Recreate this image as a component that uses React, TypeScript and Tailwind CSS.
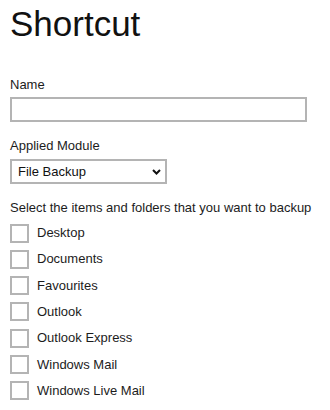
import { useState } from "react";

const items = [
  "Desktop",
  "Documents",
  "Favourites",
  "Outlook",
  "Outlook Express",
  "Windows Mail",
  "Windows Live Mail",
];

export default function App() {
  const [name, setName] = useState("");
  const [module, setModule] = useState("File Backup");
  const [checked, setChecked] = useState<Record<string, boolean>>({});

  return (
    <div className="w-[330px] h-[410px] bg-white pl-[10px] pt-[4px] text-[#1c1c1c] font-['Liberation_Sans',Arial,sans-serif]">
      <h1 className="text-[35px] leading-[40px] text-[#111]">Shortcut</h1>

      <label className="block mt-[33px] text-[13px] leading-[16px]">Name</label>
      <input
        className="block mt-[4px] w-[297px] h-[25px] border-2 border-[#b4b4b4] px-[5px] text-[13px] outline-none"
        value={name}
        onChange={(e) => setName(e.target.value)}
      />

      <label className="block mt-[16px] text-[13px] leading-[16px]">Applied Module</label>
      <div className="relative mt-[5px] w-[157px] h-[25px]">
        <select
          className="appearance-none block w-full h-full border-2 border-[#b4b4b4] pl-[6px] pr-[20px] text-[13px] text-[#111] outline-none"
          value={module}
          onChange={(e) => setModule(e.target.value)}
        >
          <option>File Backup</option>
          <option>Mail Backup</option>
        </select>
        <svg
          className="pointer-events-none absolute right-[6px] top-[10px]"
          width="9"
          height="6"
          viewBox="0 0 9 6"
        >
          <polyline points="1,1 4.5,4.5 8,1" fill="none" stroke="#111" strokeWidth="2" />
        </svg>
      </div>

      <p className="mt-[16px] text-[13px] leading-[16px]">Select the items and folders that you want to backup</p>
      <div className="mt-[7.5px] flex flex-col gap-[7.33px]">
        {items.map((item) => (
          <label key={item} className="flex items-center gap-[8px] h-[19px] text-[13px] leading-[16px] cursor-pointer">
            <input
              type="checkbox"
              className="appearance-none w-[19px] h-[19px] border-2 border-[#b4b4b4] bg-white checked:bg-[#b4b4b4] shrink-0"
              checked={!!checked[item]}
              onChange={(e) => setChecked({ ...checked, [item]: e.target.checked })}
            />
            <span>{item}</span>
          </label>
        ))}
      </div>
    </div>
  );
}
